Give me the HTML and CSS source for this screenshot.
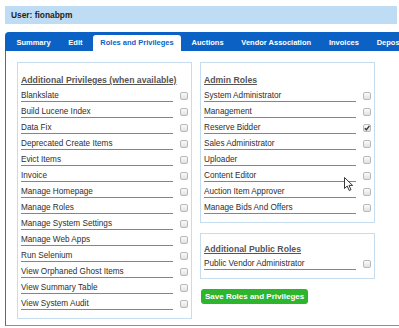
FILE: index.html
```html
<!DOCTYPE html>
<html lang="en">
  <head>
    <meta charset="UTF-8" />
    <title>User Roles and Privileges</title>
    <link rel="stylesheet" href="styles.css">
  </head>
  <body>
    <div class="user-bar">User: fionabpm</div>

    <div class="tabs">
      <span class="tab">Summary</span>
      <span class="tab">Edit</span>
      <span class="tab active">Roles and Privileges</span>
      <span class="tab">Auctions</span>
      <span class="tab">Vendor Association</span>
      <span class="tab">Invoices</span>
      <span class="tab">Deposits</span>
    </div>

    <div class="tab-content">
      <div class="panel panel-long">
        <div class="panel-title">Additional Privileges (when available)</div>
        <div class="row"><span class="label">Blankslate</span><span class="check"></span></div>
        <div class="row"><span class="label">Build Lucene Index</span><span class="check"></span></div>
        <div class="row"><span class="label">Data Fix</span><span class="check"></span></div>
        <div class="row"><span class="label">Deprecated Create Items</span><span class="check"></span></div>
        <div class="row"><span class="label">Evict Items</span><span class="check"></span></div>
        <div class="row"><span class="label">Invoice</span><span class="check"></span></div>
        <div class="row"><span class="label">Manage Homepage</span><span class="check"></span></div>
        <div class="row"><span class="label">Manage Roles</span><span class="check"></span></div>
        <div class="row"><span class="label">Manage System Settings</span><span class="check"></span></div>
        <div class="row"><span class="label">Manage Web Apps</span><span class="check"></span></div>
        <div class="row"><span class="label">Run Selenium</span><span class="check"></span></div>
        <div class="row"><span class="label">View Orphaned Ghost Items</span><span class="check"></span></div>
        <div class="row"><span class="label">View Summary Table</span><span class="check"></span></div>
        <div class="row"><span class="label">View System Audit</span><span class="check"></span></div>
      </div>

      <div class="side">
        <div class="panel">
          <div class="panel-title">Admin Roles</div>
          <div class="row"><span class="label">System Administrator</span><span class="check"></span></div>
          <div class="row"><span class="label">Management</span><span class="check"></span></div>
          <div class="row">
            <span class="label">Reserve Bidder</span>
            <span class="check checked">
              <svg viewBox="0 0 8 8" width="8" height="8"><path d="M1.8 4.2 L3.4 5.8 L6.4 1.8" fill="none" stroke="#333" stroke-width="1.4"/></svg>
            </span>
          </div>
          <div class="row"><span class="label">Sales Administrator</span><span class="check"></span></div>
          <div class="row"><span class="label">Uploader</span><span class="check"></span></div>
          <div class="row"><span class="label">Content Editor</span><span class="check"></span></div>
          <div class="row"><span class="label">Auction Item Approver</span><span class="check"></span></div>
          <div class="row"><span class="label">Manage Bids And Offers</span><span class="check"></span></div>
        </div>

        <div class="panel panel-public">
          <div class="panel-title">Additional Public Roles</div>
          <div class="row"><span class="label">Public Vendor Administrator</span><span class="check"></span></div>
        </div>

        <button class="save-btn">Save Roles and Privileges</button>
      </div>
    </div>

    <!-- mouse pointer caught in the screenshot -->
    <svg class="cursor" viewBox="0 0 10 15" width="10" height="15">
      <path d="M0.5 0.5 L0.5 11.5 L3.2 9 L5.2 13.5 L7 12.7 L5 8.4 L8.6 8.4 Z" fill="#fff" stroke="#222" stroke-width="0.9" stroke-linejoin="round"/>
    </svg>
  </body>
</html>
```

FILE: styles.css
```css
html,
body {
  margin: 0;
  overflow: hidden;
}
body {
  font-family: "Liberation Sans", Arial, sans-serif;
  background: #fff;
  width: 399px;
  height: 328px;
  position: relative;
}
.user-bar {
  margin: 6px 2px 0 5px;
  height: 18px;
  line-height: 18px;
  padding-left: 6px;
  background: #bedcf4;
  color: #222;
  font-size: 8.4px;
  font-weight: bold;
}
.tabs {
  display: flex;
  align-items: flex-end;
  width: 420px;
  height: 19px;
  margin: 8px 0 0 5px;
  padding-left: 4px;
  background: #0b62c4;
  border-radius: 4px 0 0 0;
  white-space: nowrap;
}
.tab {
  height: 16px;
  line-height: 16px;
  padding: 0 7.4px;
  margin-right: 3px;
  color: #fff;
  font-size: 7.5px;
  font-weight: bold;
}
.tab.active {
  background: #fff;
  color: #0b62c4;
  border-radius: 3px 3px 0 0;
}
.tab-content {
  display: flex;
  align-items: flex-start;
  gap: 8px;
  box-sizing: border-box;
  width: 420px;
  height: 275px;
  margin-left: 5px;
  padding: 11px 0 0 11px;
  border-left: 1px solid #2a73cc;
  border-bottom: 1px solid #5b9ae0;
}
.side {
  display: flex;
  flex-direction: column;
  align-items: flex-start;
  gap: 10px;
}
.panel {
  width: 175px;
  box-sizing: border-box;
  padding: 9px 3px 6px;
  border: 1px solid #c6dcef;
}
.panel-title {
  line-height: 16px;
  color: #555;
  font-size: 8.7px;
  font-weight: bold;
  text-decoration: underline;
}
.panel-public .panel-title {
  line-height: 13px;
}
.row {
  display: flex;
  align-items: center;
  height: 16px;
}
.label {
  width: 152px;
  line-height: 11px;
  color: #2e2e2e;
  font-size: 8.2px;
  border-bottom: 1px solid #858585;
  white-space: nowrap;
}
.check {
  display: flex;
  width: 8px;
  height: 8px;
  margin-left: 7px;
  box-sizing: border-box;
  border: 1px solid #b9b9b9;
  border-radius: 2px;
  background: linear-gradient(#fbfbfb, #e0e0e0);
}
.check svg {
  margin: -1px;
}
.save-btn {
  margin-left: 1px;
  height: 15px;
  padding: 0 4px;
  border: none;
  border-radius: 3px;
  background: #2db52d;
  color: #fff;
  font-family: "Liberation Sans", Arial, sans-serif;
  font-size: 8px;
  font-weight: bold;
  line-height: 15px;
}
.cursor {
  position: absolute;
  left: 344px;
  top: 177px;
}
```
